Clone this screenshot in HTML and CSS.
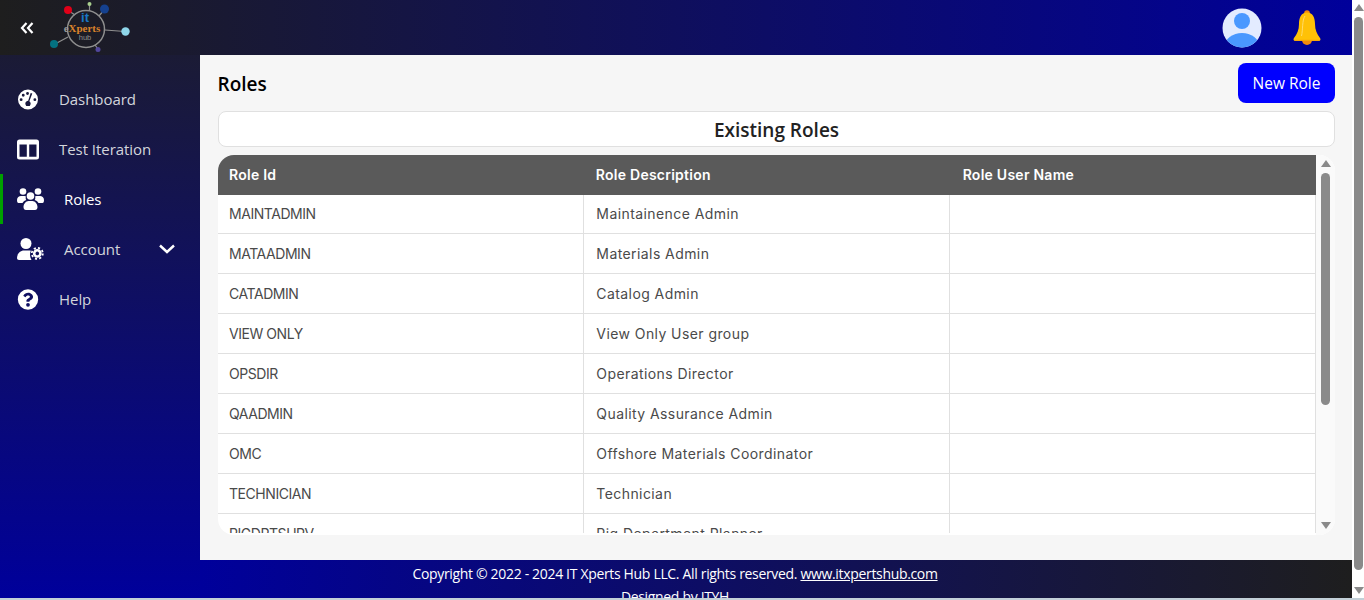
FILE: index.html
```html
<!DOCTYPE html>
<html lang="en">
<head>
<meta charset="utf-8">
<title>Roles</title>
<link rel="stylesheet" href="styles.css">
</head>
<body>
<div class="window">
  <div class="app">
    <header class="topbar">
      <div class="brand">
        <svg class="collapse" viewBox="0 0 14 12" width="14" height="12"><path d="M6.500 1 2 6l4.500 5M12.500 1 8 6l4.500 5" fill="none" stroke="#fff" stroke-width="2.200"/></svg>
        <svg class="logo" viewBox="0 0 84 54" width="84" height="54">
          <g stroke="#8f8f8f" stroke-width="1.200" fill="none">
            <circle cx="36" cy="29" r="18.500" stroke-width="1.500"/>
            <path d="M19 11 25 15M39.500 4V11M54 10 49 16M55 30 75 31.500M5 44 18 37M45 45 48 49"/>
          </g>
          <circle cx="18" cy="10" r="4" fill="#e00018"/>
          <circle cx="39.500" cy="4" r="2" fill="#a9d08e"/>
          <circle cx="54.500" cy="9" r="4.500" fill="#15418f"/>
          <circle cx="75.500" cy="31.500" r="4.200" fill="#8fd6ea"/>
          <circle cx="4" cy="44" r="4" fill="#047180"/>
          <circle cx="48" cy="49.500" r="2.500" fill="#51469c"/>
          <text x="35" y="22" class="logo-it">it</text>
          <text x="32" y="32" class="logo-xp"><tspan class="logo-e">e</tspan>Xperts</text>
          <text x="35" y="40" class="logo-hub">hub</text>
        </svg>
      </div>
      <div class="top-actions">
        <svg viewBox="0 0 40 40" width="40" height="40" class="avatar">
          <defs><clipPath id="av"><circle cx="20" cy="20" r="19.500"/></clipPath></defs>
          <circle cx="20" cy="20" r="19.500" fill="#e3ebff"/>
          <g clip-path="url(#av)" fill="#4a98ff">
            <circle cx="20" cy="13" r="8"/>
            <ellipse cx="20" cy="38" rx="17" ry="13"/>
          </g>
        </svg>
        <svg viewBox="0 0 30 36" width="30" height="36" class="bell">
          <circle cx="15" cy="3" r="2.800" fill="#f58a0b"/>
          <path d="M10 30h10a5 5 0 0 1-10 0Z" fill="#f58a0b"/>
          <path d="M15 2.500C9 2.500 7 8 7 14c0 6-2 10-5 14-1 1.500-.5 3 1.500 3h23c2 0 2.500-1.500 1.500-3-3-4-5-8-5-14C23 8 21 2.500 15 2.500Z" fill="#ffc107"/>
          <path d="M2.500 30.300h25" stroke="#f5a00b" stroke-width="1"/>
          <path d="M9.500 26C11 20 10 10 13 6" fill="none" stroke="#ffdb6b" stroke-width="1"/>
        </svg>
      </div>
    </header>
    <div class="body-row">
      <nav class="sidebar">
        <a class="nav-item">
          <svg class="nav-icon" viewBox="0 0 22 22"><path fill="#fff" fill-rule="evenodd" d="M11 .5a10.500 10.500 0 1 1 0 21 10.500 10.500 0 0 1 0-21ZM10.500 3.200a1.500 1.500 0 1 0 0 3 1.500 1.500 0 0 0 0-3ZM6 5a1.500 1.500 0 1 0 0 3 1.500 1.500 0 0 0 0-3ZM3.800 9.700a1.500 1.500 0 1 0 0 3 1.500 1.500 0 0 0 0-3ZM18.200 9.700a1.500 1.500 0 1 0 0 3 1.500 1.500 0 0 0 0-3ZM13.800 4.200 11.200 12.300c-1.700.1-3 1.400-3 3 0 1 .4 1.800 1 2.400h3.600c.6-.6 1-1.400 1-2.400 0-1.100-.6-2-1.400-2.500L15.500 4.700Z"/></svg>
          <span class="nav-label">Dashboard</span>
        </a>
        <a class="nav-item">
          <svg class="nav-icon" viewBox="0 0 22 20"><path fill="#fff" fill-rule="evenodd" d="M2.500 0h17A2.500 2.500 0 0 1 22 2.500v15a2.500 2.500 0 0 1-2.500 2.500h-17A2.500 2.500 0 0 1 0 17.500v-15A2.500 2.500 0 0 1 2.500 0ZM2.500 5v12.300h7.300V5ZM12.200 5v12.300h7.300V5Z"/></svg>
          <span class="nav-label">Test Iteration</span>
        </a>
        <a class="nav-item active">
          <svg class="nav-icon wide" viewBox="0 0 27 22"><g fill="#fff"><circle cx="6" cy="3.500" r="3.300"/><circle cx="21" cy="3.500" r="3.300"/><circle cx="13.500" cy="8" r="3.800"/><path d="M0 12c0-2.500 2-4 4-4h3.500c.5 0 1 .2 1.500.5-.5 1-.5 2.500.3 3.500C7.500 12.500 6 14 5.500 15H1.500C.5 15 0 14 0 12ZM27 12c0-2.500-2-4-4-4h-3.500c-.5 0-1 .2-1.500.5.5 1 .5 2.500-.3 3.500 1.800.5 3.300 2 3.800 3h4c1 0 1.500-1 1.500-3ZM6.500 19c0-3 2.500-6 5-6h4c2.500 0 5 3 5 6 0 2-1 3-2.500 3H9c-1.500 0-2.500-1-2.500-3Z"/></g></svg>
          <span class="nav-label indented">Roles</span>
        </a>
        <a class="nav-item">
          <svg class="nav-icon wide" viewBox="0 0 27 22"><g fill="#fff"><circle cx="9" cy="5.500" r="5.500"/><path d="M0 20c0-4 3-7.500 7-7.500h5c.7 0 1.300.1 1.900.3-1.100 1.900-1.400 5.700.6 9.200H2c-1.200 0-2-.8-2-2Z"/></g><g fill="none" stroke="#fff" transform="translate(20.300 15.400)"><circle r="3.100" stroke-width="2.600"/><circle r="5.500" stroke-width="1.800" stroke-dasharray="2.160 2.160"/></g></svg>
          <span class="nav-label indented">Account</span>
          <svg class="chevron" viewBox="0 0 16 10" width="16" height="10"><path d="M1 1.500 8 8l7-6.500" fill="none" stroke="#fff" stroke-width="2.400"/></svg>
        </a>
        <a class="nav-item">
          <svg class="nav-icon" viewBox="0 0 512 512"><path fill="#fff" d="M504 256a248 248 0 1 1-496 0 248 248 0 0 1 496 0ZM262.700 90c-54.500 0-89.300 23-116.600 63.800-3.500 5.300-2.400 12.400 2.700 16.300l34.700 26.300c5.200 3.900 12.600 3 16.700-2.100 17.900-22.700 30.100-35.800 57.300-35.800 20.400 0 45.700 13.100 45.700 33 0 15-12.400 22.700-32.600 34-23.600 13.200-54.800 29.700-54.800 70.900v4c0 6.600 5.400 12 12 12h56c6.600 0 12-5.400 12-12v-1.300c0-28.600 83.500-29.800 83.500-107.200C379.300 133 317.100 90 262.700 90ZM256 339a46 46 0 1 0 0 92 46 46 0 0 0 0-92Z"/></svg>
          <span class="nav-label">Help</span>
        </a>
      </nav>
      <div class="main-col">
        <main class="content">
          <div class="title-row">
            <h1 class="page-title">Roles</h1>
            <button class="new-role">New Role</button>
          </div>
          <div class="existing">Existing Roles</div>
          <div class="table-panel">
            <div class="table-clip">
              <table class="roles">
                <thead>
                  <tr><th>Role Id</th><th>Role Description</th><th>Role User Name</th></tr>
                </thead>
                <tbody>
                  <tr><td>MAINTADMIN</td><td>Maintainence Admin</td><td></td></tr>
                  <tr><td>MATAADMIN</td><td>Materials Admin</td><td></td></tr>
                  <tr><td>CATADMIN</td><td>Catalog Admin</td><td></td></tr>
                  <tr><td>VIEW ONLY</td><td>View Only User group</td><td></td></tr>
                  <tr><td>OPSDIR</td><td>Operations Director</td><td></td></tr>
                  <tr><td>QAADMIN</td><td>Quality Assurance Admin</td><td></td></tr>
                  <tr><td>OMC</td><td>Offshore Materials Coordinator</td><td></td></tr>
                  <tr><td>TECHNICIAN</td><td>Technician</td><td></td></tr>
                  <tr><td>RIGDPTSUPV</td><td>Rig Department Planner</td><td></td></tr>
                </tbody>
              </table>
            </div>
            <div class="inner-scroll">
              <span class="arrow up"></span>
              <span class="thumb"></span>
              <span class="arrow down"></span>
            </div>
          </div>
        </main>
        <footer class="footer">
          <p>Copyright © 2022 - 2024 IT Xperts Hub LLC. All rights reserved. <a class="site-link">www.itxpertshub.com</a></p>
          <p>Designed by ITYH</p>
        </footer>
      </div>
    </div>
  </div>
  <div class="page-scroll">
    <span class="arrow up"></span>
    <span class="thumb"></span>
    <span class="arrow down"></span>
  </div>
</div>
<div class="window-edge"></div>
</body>
</html>
```

FILE: styles.css
```css
* { box-sizing: border-box; }
html, body { margin: 0; height: 600px; overflow: hidden; background: #fff; }
body { font-family: "Open Sans", "Noto Sans", sans-serif; }
.window { display: flex; height: 598px; }
.window-edge { height: 2px; background: #c3d0d8; }
.app { width: 1352px; display: flex; flex-direction: column; }

.topbar {
  height: 55px; flex: none; display: flex; justify-content: space-between; align-items: center;
  background: linear-gradient(90deg, #1e1e1e 0%, #00009b 100%);
}
.brand { display: flex; align-items: center; width: 200px; height: 55px; padding-left: 20px; }
.collapse { flex: none; }
.logo { flex: none; margin-left: 16px; margin-top: -1px; }
.logo-it { font: 700 13px "Liberation Sans", sans-serif; fill: #1a78c8; text-anchor: middle; }
.logo-xp { font: 700 11px "Liberation Serif", serif; fill: #d9822b; text-anchor: middle; }
.logo-e { fill: #9a9a9a; }
.logo-hub { font: 400 7.500px "Liberation Sans", sans-serif; fill: #8f8f8f; text-anchor: middle; }
.top-actions { display: flex; align-items: center; gap: 30px; padding-right: 30px; }

.body-row { flex: 1; display: flex; min-height: 0; }
.sidebar {
  width: 200px; flex: none; padding-top: 19px;
  background: linear-gradient(180deg, #1b1b35 0%, #00009b 100%);
}
.nav-item {
  display: flex; align-items: center; height: 50px; padding-left: 17px;
  color: #d3d5dc; font-size: 15px; letter-spacing: -0.05px; position: relative;
}
.nav-item.active { color: #fff; }
.nav-item.active::before { content: ""; position: absolute; left: 0; top: 0; bottom: 0; width: 3px; background: #00a000; }
.nav-icon { width: 22px; height: 21px; flex: none; }
.nav-icon.wide { width: 27px; height: 22px; }
.nav-label { margin-left: 20px; }
.nav-label.indented { margin-left: 20px; }
.chevron { margin-left: auto; margin-right: 25px; }

.main-col { flex: 1; display: flex; flex-direction: column; min-width: 0; }
.content { height: 505px; flex: none; background: #f6f6f6; padding: 8px 17px 0 18px; }
.title-row { display: flex; justify-content: space-between; align-items: center; height: 40px; }
.page-title { margin: 2px 0 0 -0.5px; font-size: 19px; font-weight: 600; color: #000; }
.new-role {
  width: 97px; height: 40px; border: 0; border-radius: 8px; background: #0000ff; color: #fff;
  font: 400 15.500px "Open Sans", sans-serif; padding: 0;
}
.existing {
  margin-top: 8px; height: 36px; padding-top: 2px; background: #fff; border: 1px solid #e0e0e0; border-radius: 8px;
  display: flex; align-items: center; justify-content: center; font-size: 19px; font-weight: 600; color: #222;
}
.table-panel { margin-top: 8px; height: 380px; display: flex; background: #fff; border-radius: 16px; overflow: hidden; }
.table-clip { width: 1098px; height: 378px; flex: none; overflow: hidden; }
.roles { width: 1098px; border-collapse: collapse; table-layout: fixed; font-family: Inter, "Open Sans", sans-serif; font-size: 14px; }
.roles th {
  height: 40px; padding: 0 11px 2px; text-align: left; background: #5a5a5a; color: #fff; font-weight: 600; letter-spacing: 0.25px;
}
.roles td {
  height: 40px; padding: 0 12px 0 11px; color: #4a4a4a; border-right: 1px solid #e0e0e0; border-bottom: 1px solid #e0e0e0;
}
.roles tbody tr:first-child td { height: 38px; }
.roles td:nth-child(1) { letter-spacing: -0.45px; }
.roles td:nth-child(2) { letter-spacing: 0.42px; }
.roles td:nth-child(n+2), .roles th:nth-child(n+2) { padding-left: 12px; }
.roles th:nth-child(3) { padding-left: 13px; }
.inner-scroll { flex: 1; background: #fafafa; position: relative; }
.arrow { position: absolute; width: 0; height: 0; border-left: 5px solid transparent; border-right: 5px solid transparent; }
.arrow.up { border-bottom: 7px solid #8a8a8a; }
.arrow.down { border-top: 7px solid #8a8a8a; }
.thumb { position: absolute; background: #8a8a8a; border-radius: 5px; }
.inner-scroll .arrow.up { top: 5px; left: 5px; }
.inner-scroll .arrow.down { bottom: 6px; left: 5px; }
.inner-scroll .thumb { top: 18px; left: 5px; width: 9px; height: 232px; }

.footer {
  flex: 1; overflow: hidden; padding: 4px 202px 0 0; text-align: center; color: #fff; font-size: 14px; line-height: 19px; letter-spacing: -0.33px;
  background: linear-gradient(90deg, #00009b 0%, #1e1e1e 100%);
}
.footer p { margin: 0 0 4px; }
.site-link { text-decoration: underline; }

.page-scroll { width: 12px; flex: none; background: #fff; position: relative; }
.page-scroll .arrow.up { top: 4px; left: 2px; }
.page-scroll .arrow.down { bottom: 4px; left: 2px; }
.page-scroll .thumb { top: 17px; left: 2px; width: 9px; height: 553px; }
```
